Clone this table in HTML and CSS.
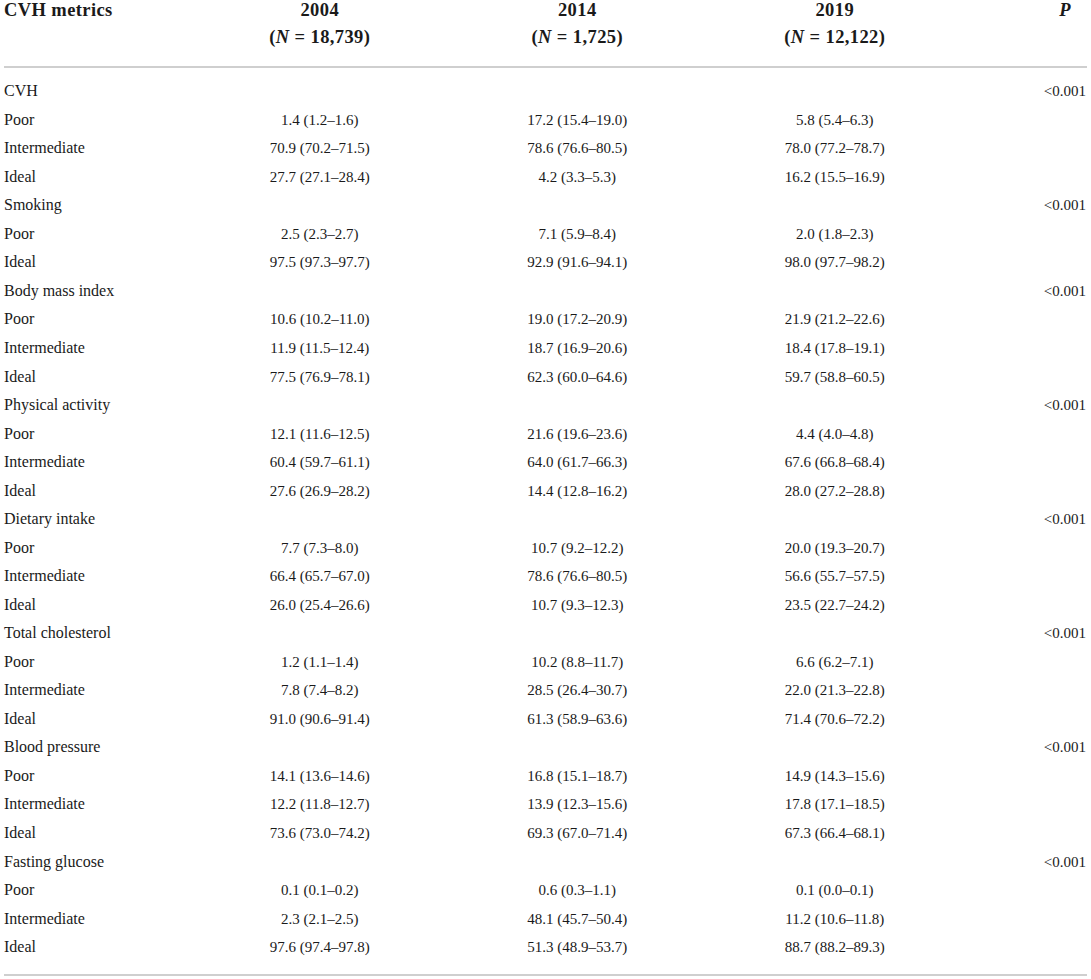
FILE: index.html
```html
<!DOCTYPE html>
<html>
<head>
<meta charset="utf-8">
<link rel="stylesheet" href="styles.css">
</head>
<body>
<table class="metrics">
<colgroup>
<col class="c-label"><col class="c-year"><col class="c-year"><col class="c-year"><col class="c-p">
</colgroup>
<thead>
<tr>
<th class="h-label">CVH metrics</th>
<th class="h-year">2004<br>(<i>N</i> = 18,739)</th>
<th class="h-year">2014<br>(<i>N</i> = 1,725)</th>
<th class="h-year">2019<br>(<i>N</i> = 12,122)</th>
<th class="h-p"><i>P</i></th>
</tr>
</thead>
<tbody>
<tr class="first"><td>CVH</td><td></td><td></td><td></td><td class="p">&lt;0.001</td></tr>
<tr><td>Poor</td><td>1.4 (1.2–1.6)</td><td>17.2 (15.4–19.0)</td><td>5.8 (5.4–6.3)</td><td class="p"></td></tr>
<tr><td>Intermediate</td><td>70.9 (70.2–71.5)</td><td>78.6 (76.6–80.5)</td><td>78.0 (77.2–78.7)</td><td class="p"></td></tr>
<tr><td>Ideal</td><td>27.7 (27.1–28.4)</td><td>4.2 (3.3–5.3)</td><td>16.2 (15.5–16.9)</td><td class="p"></td></tr>
<tr><td>Smoking</td><td></td><td></td><td></td><td class="p">&lt;0.001</td></tr>
<tr><td>Poor</td><td>2.5 (2.3–2.7)</td><td>7.1 (5.9–8.4)</td><td>2.0 (1.8–2.3)</td><td class="p"></td></tr>
<tr><td>Ideal</td><td>97.5 (97.3–97.7)</td><td>92.9 (91.6–94.1)</td><td>98.0 (97.7–98.2)</td><td class="p"></td></tr>
<tr><td>Body mass index</td><td></td><td></td><td></td><td class="p">&lt;0.001</td></tr>
<tr><td>Poor</td><td>10.6 (10.2–11.0)</td><td>19.0 (17.2–20.9)</td><td>21.9 (21.2–22.6)</td><td class="p"></td></tr>
<tr><td>Intermediate</td><td>11.9 (11.5–12.4)</td><td>18.7 (16.9–20.6)</td><td>18.4 (17.8–19.1)</td><td class="p"></td></tr>
<tr><td>Ideal</td><td>77.5 (76.9–78.1)</td><td>62.3 (60.0–64.6)</td><td>59.7 (58.8–60.5)</td><td class="p"></td></tr>
<tr><td>Physical activity</td><td></td><td></td><td></td><td class="p">&lt;0.001</td></tr>
<tr><td>Poor</td><td>12.1 (11.6–12.5)</td><td>21.6 (19.6–23.6)</td><td>4.4 (4.0–4.8)</td><td class="p"></td></tr>
<tr><td>Intermediate</td><td>60.4 (59.7–61.1)</td><td>64.0 (61.7–66.3)</td><td>67.6 (66.8–68.4)</td><td class="p"></td></tr>
<tr><td>Ideal</td><td>27.6 (26.9–28.2)</td><td>14.4 (12.8–16.2)</td><td>28.0 (27.2–28.8)</td><td class="p"></td></tr>
<tr><td>Dietary intake</td><td></td><td></td><td></td><td class="p">&lt;0.001</td></tr>
<tr><td>Poor</td><td>7.7 (7.3–8.0)</td><td>10.7 (9.2–12.2)</td><td>20.0 (19.3–20.7)</td><td class="p"></td></tr>
<tr><td>Intermediate</td><td>66.4 (65.7–67.0)</td><td>78.6 (76.6–80.5)</td><td>56.6 (55.7–57.5)</td><td class="p"></td></tr>
<tr><td>Ideal</td><td>26.0 (25.4–26.6)</td><td>10.7 (9.3–12.3)</td><td>23.5 (22.7–24.2)</td><td class="p"></td></tr>
<tr><td>Total cholesterol</td><td></td><td></td><td></td><td class="p">&lt;0.001</td></tr>
<tr><td>Poor</td><td>1.2 (1.1–1.4)</td><td>10.2 (8.8–11.7)</td><td>6.6 (6.2–7.1)</td><td class="p"></td></tr>
<tr><td>Intermediate</td><td>7.8 (7.4–8.2)</td><td>28.5 (26.4–30.7)</td><td>22.0 (21.3–22.8)</td><td class="p"></td></tr>
<tr><td>Ideal</td><td>91.0 (90.6–91.4)</td><td>61.3 (58.9–63.6)</td><td>71.4 (70.6–72.2)</td><td class="p"></td></tr>
<tr><td>Blood pressure</td><td></td><td></td><td></td><td class="p">&lt;0.001</td></tr>
<tr><td>Poor</td><td>14.1 (13.6–14.6)</td><td>16.8 (15.1–18.7)</td><td>14.9 (14.3–15.6)</td><td class="p"></td></tr>
<tr><td>Intermediate</td><td>12.2 (11.8–12.7)</td><td>13.9 (12.3–15.6)</td><td>17.8 (17.1–18.5)</td><td class="p"></td></tr>
<tr><td>Ideal</td><td>73.6 (73.0–74.2)</td><td>69.3 (67.0–71.4)</td><td>67.3 (66.4–68.1)</td><td class="p"></td></tr>
<tr><td>Fasting glucose</td><td></td><td></td><td></td><td class="p">&lt;0.001</td></tr>
<tr><td>Poor</td><td>0.1 (0.1–0.2)</td><td>0.6 (0.3–1.1)</td><td>0.1 (0.0–0.1)</td><td class="p"></td></tr>
<tr><td>Intermediate</td><td>2.3 (2.1–2.5)</td><td>48.1 (45.7–50.4)</td><td>11.2 (10.6–11.8)</td><td class="p"></td></tr>
<tr class="last"><td>Ideal</td><td>97.6 (97.4–97.8)</td><td>51.3 (48.9–53.7)</td><td>88.7 (88.2–89.3)</td><td class="p"></td></tr>
</tbody>
</table>
</body>
</html>
```
FILE: styles.css
```css
html, body {
  margin: 0;
  padding: 0;
  background: #ffffff;
}
body {
  font-family: "Liberation Serif", "Times New Roman", serif;
  color: #1a1a1a;
}
.metrics {
  margin: -3px 0 0 4px;
  width: 1083px;
  table-layout: fixed;
  border-collapse: collapse;
  border-bottom: 2px solid #cfcfcf;
}
.c-label { width: 187px; }
.c-year { width: 257.5px; }
.c-p { width: 123.5px; }
.metrics thead th {
  font-size: 18.5px;
  font-weight: bold;
  letter-spacing: 0.4px;
  line-height: 26.6px;
  padding: 0 0 16px 0;
  vertical-align: top;
  border-bottom: 2px solid #cfcfcf;
}
.metrics .h-label { text-align: left; }
.metrics .h-year { text-align: center; }
.metrics .h-p { text-align: right; padding-right: 16px; }
.metrics td {
  padding: 0;
  font-size: 15px;
  line-height: 28.53px;
  text-align: center;
  white-space: nowrap;
}
.metrics td:first-child {
  text-align: left;
  font-size: 16px;
}
.metrics td.p {
  text-align: right;
  padding-right: 1px;
}
.metrics tr.first td { padding-top: 9px; }
.metrics tr.last td { padding-bottom: 12px; }
```
